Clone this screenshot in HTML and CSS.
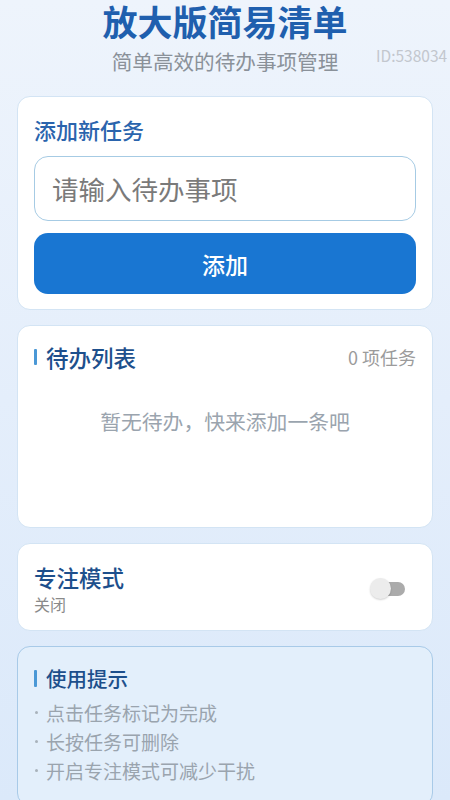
FILE: index.html
```html
<!DOCTYPE html>
<html lang="zh">
<head>
<meta charset="utf-8">
<link rel="stylesheet" href="styles.css">
</head>
<body>
<div class="page">
  <header class="hero">
    <h1 class="title">放大版简易清单</h1>
    <p class="subtitle">简单高效的待办事项管理</p>
    <span class="watermark">ID:538034</span>
  </header>

  <section class="card add-card">
    <h2 class="add-title">添加新任务</h2>
    <div class="input">请输入待办事项</div>
    <button class="add-btn">添加</button>
  </section>

  <section class="card list-card">
    <div class="list-head">
      <h2 class="sec-title"><span class="bar"></span>待办列表</h2>
      <span class="count">0 项任务</span>
    </div>
    <p class="empty">暂无待办，快来添加一条吧</p>
  </section>

  <section class="card focus-card">
    <div class="focus-text">
      <h2 class="focus-title">专注模式</h2>
      <p class="focus-state">关闭</p>
    </div>
    <div class="switch"><span class="track"></span><span class="thumb"></span></div>
  </section>

  <section class="card tips-card">
    <h2 class="sec-title tips-title"><span class="bar"></span>使用提示</h2>
    <ul class="tips">
      <li><span class="dot"></span>点击任务标记为完成</li>
      <li><span class="dot"></span>长按任务可删除</li>
      <li><span class="dot"></span>开启专注模式可减少干扰</li>
    </ul>
  </section>
</div>
</body>
</html>
```

FILE: styles.css
```css
* { box-sizing: border-box; }
html, body { margin: 0; padding: 0; }
body {
  width: 450px;
  height: 800px;
  overflow: hidden;
  font-family: "Noto Sans CJK SC", "Noto Sans", sans-serif;
  background: linear-gradient(180deg, #eef4fc 0%, #e4eefb 50%, #dbe9fa 100%);
}
.page {
  padding: 0 17px;
  display: flex;
  flex-direction: column;
}
.hero {
  position: relative;
  text-align: center;
  margin-bottom: 22px;
}
.title {
  margin: 0;
  padding-top: 1px;
  font-size: 35px;
  line-height: 40px;
  font-weight: 700;
  color: #1f5fae;
}
.subtitle {
  margin: 7px 0 0;
  font-size: 20.6px;
  line-height: 26px;
  color: #8a9199;
}
.watermark {
  position: absolute;
  left: 359px;
  top: 45px;
  font-size: 15.5px;
  line-height: 20px;
  color: #c3c7ce;
  white-space: nowrap;
}
.card {
  background: #fff;
  border: 1px solid #d3e4f4;
  border-radius: 13px;
  padding: 18px 16px 15px;
  margin-bottom: 15px;
}
.add-title {
  margin: 0;
  font-size: 22px;
  line-height: 28px;
  font-weight: 500;
  color: #2a64ad;
}
.input {
  margin-top: 13px;
  height: 65px;
  border: 1.5px solid #a6cbe4;
  border-radius: 14px;
  padding: 0 17px;
  display: flex;
  align-items: center;
  font-size: 26.5px;
  color: #7a7a7a;
}
.add-btn {
  margin-top: 12px;
  width: 100%;
  height: 61px;
  border: 0;
  border-radius: 14px;
  background: #1976d2;
  color: #fff;
  font-family: inherit;
  font-size: 23px;
  font-weight: 500;
  display: flex;
  align-items: center;
  justify-content: center;
  padding: 0;
}
.list-card { padding: 16px 16px 16px; }
.list-head {
  display: flex;
  justify-content: space-between;
  align-items: center;
  height: 30px;
}
.sec-title {
  margin: 0;
  display: flex;
  align-items: center;
  font-size: 22.5px;
  line-height: 30px;
  font-weight: 500;
  color: #1d4f8c;
}
.bar {
  width: 3px;
  height: 16px;
  background: #4a98d6;
  border-radius: 1px;
  margin-right: 9px;
}
.count {
  font-size: 18px;
  color: #9b9b9b;
}
.empty {
  margin: 35px 0 76px;
  text-align: center;
  font-size: 20.8px;
  line-height: 28px;
  color: #9aa4ae;
}
.focus-card {
  display: flex;
  align-items: center;
  justify-content: space-between;
}
.focus-title {
  margin: 0;
  font-size: 22.5px;
  line-height: 30px;
  font-weight: 500;
  color: #1d4f8c;
}
.focus-state {
  margin: 1px 0 0;
  font-size: 16px;
  line-height: 22px;
  color: #8a8a8a;
}
.switch {
  position: relative;
  width: 35px;
  height: 22px;
  margin-right: 11px;
}
.track {
  position: absolute;
  left: 6px;
  top: 4px;
  width: 29px;
  height: 14px;
  border-radius: 7px;
  background: #ababab;
}
.thumb {
  position: absolute;
  left: 0;
  top: 0;
  width: 21px;
  height: 21px;
  border-radius: 50%;
  background: #ececec;
  box-shadow: 0 1px 2px rgba(0,0,0,0.18);
}
.tips-card {
  background: #e3effb;
  border-color: #a8cae8;
  padding: 17px 16px 20px;
}
.tips-title {
  font-size: 20.5px;
  line-height: 28px;
}
.tips-title .bar { height: 17px; }
.tips {
  list-style: none;
  margin: 6px 0 0;
  padding: 0;
}
.tips li {
  display: flex;
  align-items: center;
  font-size: 19px;
  line-height: 29px;
  color: #9aa4ae;
}
.dot {
  width: 3px;
  height: 3px;
  border-radius: 50%;
  background: #a9b2bb;
  margin: 0 8px 0 1px;
  flex: none;
}
```
